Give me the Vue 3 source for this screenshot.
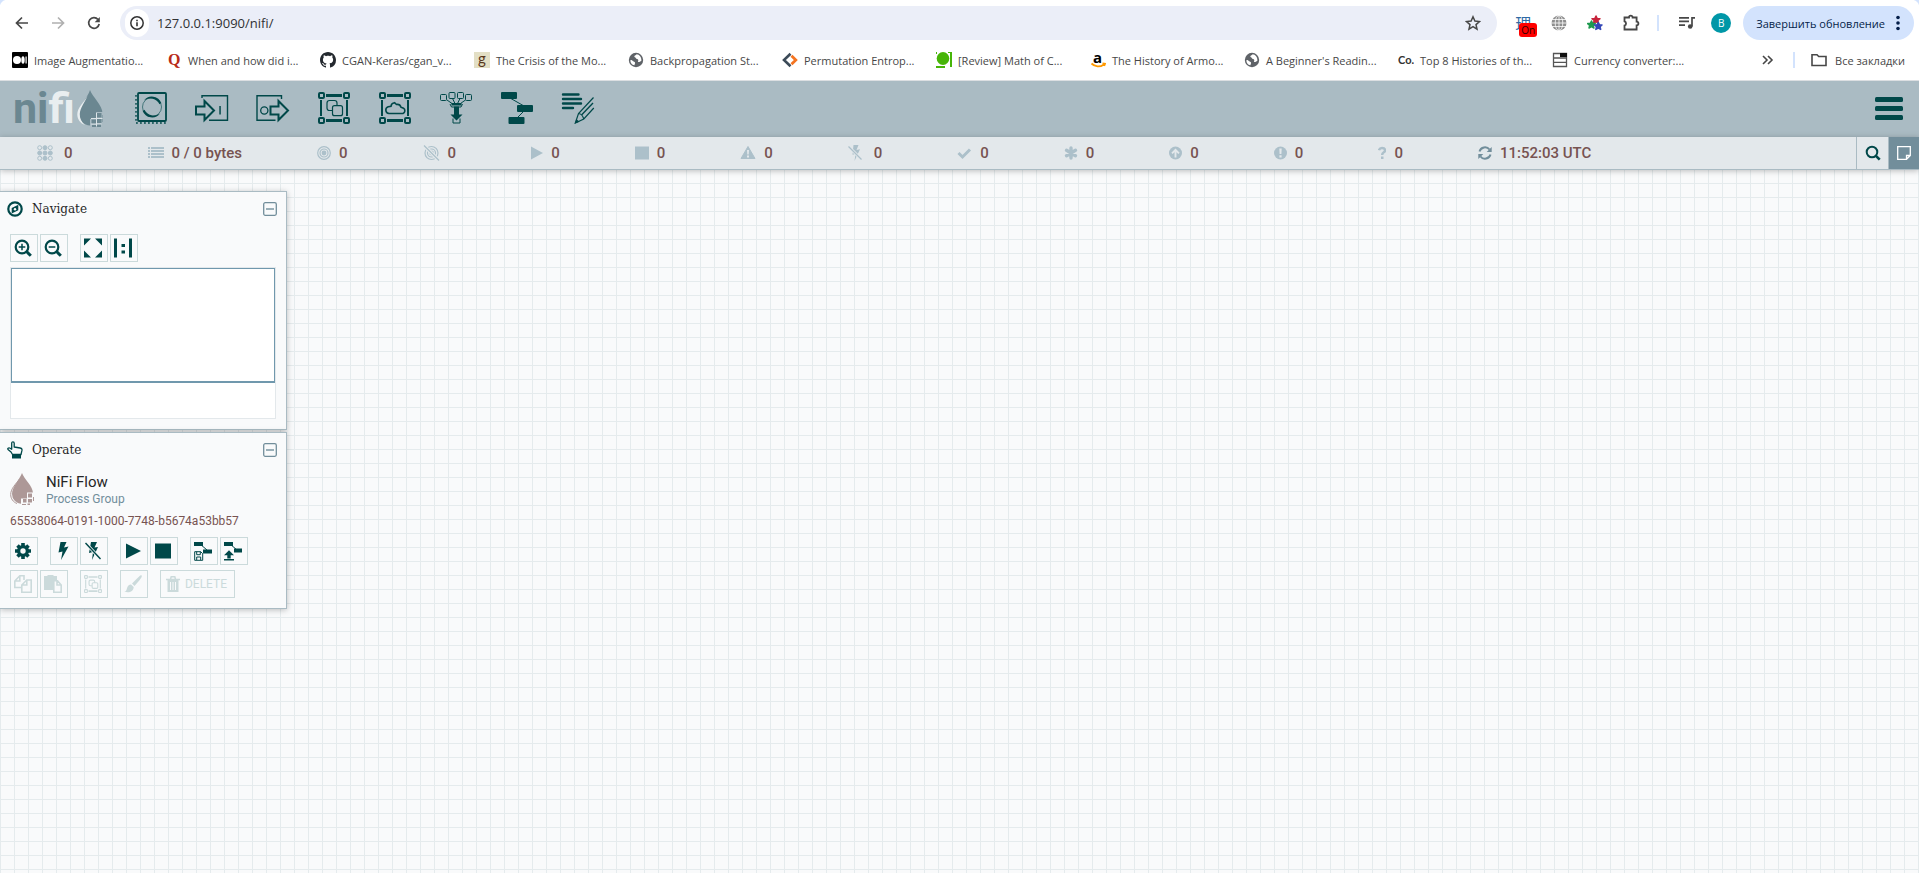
<script setup>
import { ref } from 'vue'

const address = ref('127.0.0.1:9090/nifi/')

const bookmarks = [
  { icon: 'medium', label: 'Image Augmentatio...' },
  { icon: 'quora', label: 'When and how did i...' },
  { icon: 'github', label: 'CGAN-Keras/cgan_v...' },
  { icon: 'goodreads', label: 'The Crisis of the Mo...' },
  { icon: 'earth', label: 'Backpropagation St...' },
  { icon: 'brackets', label: 'Permutation Entrop...' },
  { icon: 'review', label: '[Review] Math of C...' },
  { icon: 'amazon', label: 'The History of Armo...' },
  { icon: 'earth', label: "A Beginner's Readin..." },
  { icon: 'co', label: 'Top 8 Histories of th...' },
  { icon: 'sheet', label: 'Currency converter:...' },
]

const components = [
  { icon: 'processor', label: 'Processor' },
  { icon: 'portIn', label: 'Input Port' },
  { icon: 'portOut', label: 'Output Port' },
  { icon: 'group', label: 'Process Group' },
  { icon: 'remote', label: 'Remote Process Group' },
  { icon: 'funnel', label: 'Funnel' },
  { icon: 'template', label: 'Template' },
  { icon: 'label', label: 'Label' },
]

const stats = [
  { icon: 'threads', text: '0' },
  { icon: 'list', text: '0 / 0 bytes' },
  { icon: 'target', text: '0' },
  { icon: 'targetOff', text: '0' },
  { icon: 'playSmall', text: '0' },
  { icon: 'stopSmall', text: '0' },
  { icon: 'warning', text: '0' },
  { icon: 'boltOffSmall', text: '0' },
  { icon: 'check', text: '0' },
  { icon: 'asterisk', text: '0' },
  { icon: 'upCircle', text: '0' },
  { icon: 'alertCircle', text: '0' },
  { icon: 'question', text: '0' },
]

const zoomButtons = [
  [{ icon: 'zoomIn', label: 'Zoom In' }, { icon: 'zoomOut', label: 'Zoom Out' }],
  [{ icon: 'fit', label: 'Fit' }, { icon: 'actual', label: 'Actual Size' }],
]

const operateTop = [
  [{ icon: 'gear', label: 'Configuration' }],
  [{ icon: 'bolt', label: 'Enable' }, { icon: 'boltOff', label: 'Disable' }],
  [{ icon: 'play', label: 'Start' }, { icon: 'stop', label: 'Stop' }],
  [{ icon: 'saveTemplate', label: 'Create Template' }, { icon: 'uploadTemplate', label: 'Upload Template' }],
]

const operateBottom = [
  [{ icon: 'copy', label: 'Copy' }, { icon: 'paste', label: 'Paste' }],
  [{ icon: 'groupSmall', label: 'Group' }],
  [{ icon: 'brush', label: 'Change color' }],
]

const frame = `<g fill="none" stroke="currentColor" stroke-width="2"><rect x="1" y="1" width="5" height="5" rx="1"/><rect x="26" y="1" width="5" height="5" rx="1"/><rect x="1" y="26" width="5" height="5" rx="1"/><rect x="26" y="26" width="5" height="5" rx="1"/></g>
<path fill="currentColor" d="M8 2h16v3H8zM8 27h16v3H8zM2 8h2v16H2zM28 8h2v16h-2z"/>`

const icons = {
  medium: [16, 16, '<rect width="16" height="16" rx="1"/><circle cx="5" cy="8" r="4" fill="#fff"/><ellipse cx="11" cy="8" rx="1.700" ry="3.800" fill="#fff"/><rect x="13.500" y="4.500" width="1.200" height="7" fill="#fff"/>'],
  quora: [16, 16, '<text x="2" y="13" font-family="Liberation Serif, serif" font-weight="700" font-size="16" fill="#b92b17">Q</text>'],
  github: [16, 16, '<path fill="#24292f" d="M8 0C3.580 0 0 3.580 0 8c0 3.540 2.290 6.530 5.470 7.590.4.070.55-.17.55-.38 0-.19-.01-.82-.01-1.490-2.010.37-2.530-.49-2.690-.94-.09-.23-.48-.94-.82-1.130-.28-.15-.68-.52-.01-.53.63-.01 1.080.58 1.230.82.72 1.210 1.870.87 2.330.66.07-.52.28-.87.51-1.070-1.780-.2-3.640-.89-3.640-3.950 0-.87.31-1.590.82-2.150-.08-.2-.36-1.020.08-2.120 0 0 .67-.21 2.200.82.64-.18 1.320-.27 2-.27s1.360.09 2 .27c1.530-1.040 2.200-.82 2.200-.82.44 1.100.16 1.920.08 2.120.51.56.82 1.270.82 2.150 0 3.070-1.870 3.750-3.650 3.950.29.25.54.73.54 1.480 0 1.070-.01 1.930-.01 2.200 0 .21.15.46.55.38A8.010 8.010 0 0 0 16 8c0-4.420-3.580-8-8-8z"/>'],
  goodreads: [16, 16, '<rect width="16" height="16" fill="#e3dfc5"/><text x="4" y="12" font-family="Lato, sans-serif" font-size="15" fill="#59371b">g</text>'],
  earth: [16, 16, '<circle cx="8" cy="8" r="7.200" fill="#5f6368"/><path fill="#fff" d="M2.500 8c.5-.3 1.800.2 2.500 1s1.600.5 2 1.500-.5 1.500-.5 2.800C4 13 2 10.500 2.500 8zM8.500 2.200c-.3 1.300-2 1-2.200 2s1.200 1 1.500 1.900c.5 1.200 2 .9 2.500 1.900.3.900-.8 1-.2 1.800.8.700 2.200-.2 3.300-1C13.600 5 11.500 2.500 8.500 2.200z"/>'],
  brackets: [16, 16, '<path fill="none" stroke="#3c4a58" stroke-width="2.600" d="M8.500 1.800 2 8l6.500 6.200"/><path fill="none" stroke="#f47421" stroke-width="2.800" d="M9.500 3.800 13.800 8l-4.300 4.200"/>'],
  review: [16, 16, '<path fill="#47b508" d="M0 0h1v2H0zM12 0h4v15h-2V1h-2zM0 14h9v2H0z"/><ellipse cx="7" cy="6.500" rx="6.300" ry="6.500" fill="#47b508"/><path stroke="#fff" stroke-width="1" d="M0 13.500h12"/>'],
  amazon: [16, 16, '<text x="3" y="11" font-family="Open Sans, sans-serif" font-weight="700" font-size="15">a</text><path fill="none" stroke="#f90" stroke-width="1.800" d="M1.500 11.500c3.500 3.500 8.500 3.700 12 1.200M12.500 11.500l2.500.3-.8 2.200"/>'],
  co: [16, 16, '<text x="0" y="12" font-family="Lato, sans-serif" font-weight="700" font-size="11" fill="#333">Co.</text>'],
  sheet: [16, 16, '<path fill="#fff" stroke="#555" stroke-width="1.300" d="M1.500 1.500h13v13h-13zM1.500 6h13M1.500 10.300h13"/><path d="M8 1h7v4H8z" fill="#111"/>'],
  folder: [16, 16, '<path fill="none" stroke="#474747" stroke-width="1.600" d="M1 2.800h5l1.700 1.700H15v9H1z"/>'],
  more: [16, 16, '<path fill="none" stroke="#474747" stroke-width="1.600" d="m4 4 4 4-4 4M9 4l4 4-4 4"/>'],
  back: [16, 16, '<path fill="none" stroke="#474747" stroke-width="1.700" d="M14 8H3M8 2.500 2.500 8 8 13.500"/>'],
  forward: [16, 16, '<path fill="none" stroke="#b0b0b0" stroke-width="1.700" d="M2 8h11M8 2.500 13.500 8 8 13.500"/>'],
  reload: [16, 16, '<path fill="none" stroke="#474747" stroke-width="1.700" d="M13.200 9A5.300 5.300 0 1 1 12 4.500"/><path fill="#474747" d="M13.800 2v5.200H8.700z"/>'],
  info: [16, 16, '<circle cx="8" cy="8" r="6.200" fill="none" stroke="#333" stroke-width="1.500"/><path fill="#333" d="M7.200 7.200h1.600v4H7.200zM7.200 4.700h1.600v1.500H7.200z"/>'],
  star: [16, 16, '<path fill="none" stroke="#474747" stroke-width="1.500" d="m8 1.800 1.900 4.300 4.600.4L11 9.600l1 4.500-4-2.400-4 2.400 1-4.500-3.500-3.100 4.600-.4z"/>'],
  globe: [16, 16, '<circle cx="8" cy="8" r="7.500" fill="#8f8f8f"/><g fill="none" stroke="#fff" stroke-width=".8"><ellipse cx="8" cy="8" rx="3.800" ry="7.500"/><path d="M8 0v16M0 8h16M1 4.500h14M1 11.500h14"/></g>'],
  stars: [16, 16, '<g stroke-width="1.500" stroke-linejoin="round"><path fill="#c7243c" stroke="#c7243c" d="m9 1 1.200 2.500 2.800.2-2.200 1.800.7 2.700L9 6.800 6.500 8.200l.7-2.700L5 3.700l2.800-.2z"/><path fill="#1f9a50" stroke="#1f9a50" d="m4.500 6 1.100 2.400 2.600.2-2 1.800.7 2.600-2.400-1.300L2 13l.7-2.600-2-1.800 2.600-.2z"/><path fill="#3548b8" stroke="#3548b8" d="m11.300 7.500 1.200 2.300 2.500.2-2 1.800.7 2.600-2.400-1.300-2.500 1.300.7-2.600-2-1.800 2.600-.2z"/></g>'],
  puzzle: [18, 18, '<path fill="none" stroke="#474747" stroke-width="1.800" d="M2.500 3.500H7a1.800 1.800 0 0 1 3.600 0h4v4.200a1.800 1.800 0 0 1 0 3.600v4.200H2.500v-4a2.200 2.200 0 0 0 0-4.200z"/>'],
  playlist: [16, 16, '<path fill="#474747" d="M0 2h10v1.700H0zM0 5.600h10v1.700H0zM0 9.200h6v1.700H0z"/><path fill="none" stroke="#474747" stroke-width="1.700" d="M16 2.900h-3v8.600"/><circle cx="11.200" cy="11.500" r="2.300" fill="#474747"/>'],
  dots: [4, 16, '<g fill="#041e49"><circle cx="2" cy="2.500" r="1.800"/><circle cx="2" cy="8" r="1.800"/><circle cx="2" cy="13.500" r="1.800"/></g>'],

  drop: [26, 37, '<path fill="#6b8791" d="M13 0C11 7 2 16 2 24a11.500 11.500 0 0 0 11 11.500c8 0 12.500-6 12.500-12C25.500 15 15.500 7 13 0z"/><path fill="#e9eef0" d="M10.500 6C7 12 .3 17.500.3 24.500.3 29.500 3.500 33.500 8 35 4.500 32 2.600 28.500 2.800 24 3 18 8 12 10.500 6z"/><path fill="#aabbc3" d="M19 22h7v15H13v-8h6z"/><path fill="#6b8791" d="M20 23h4.500v4.500H20zM14.500 29.500H19V34h-4.500zM20 28.500h4.500V33H20zM25.500 25H26v7h-.5zM20 34h4v3h-4zM15 35h4v2h-4z"/><path fill="#dce4e7" d="M19 23h1v13h-1zM14 28h11.500v1H14zM14 33.500h10.500v1H14z"/>'],
  dropSmall: [24, 32, '<path fill="#ad9897" d="M12 0C10 6 2 14 2 21a10 10 0 0 0 10 10c7 0 11-5 11-10.500C23 13 14 6 12 0z"/><path fill="none" stroke="#ad9897" stroke-width="1" d="M9.500 6C6 11 .7 15.500.7 21.500c0 4 2.300 7.500 6.300 9"/><path fill="#f9fafb" d="M17 19.500h7V32H11v-6.500h6z"/><path fill="#ad9897" d="M18 20.500h4v4h-4zM13 26h3.500v3.500H13zM18 26h4v3.500h-4zM23 24h1v4h-1zM12 31h4v1h-4zM17.500 30.500H20V32h-2.500z"/>'],

  processor: [32, 32, '<rect x="3" y="1" width="28" height="28" rx="1" fill="none" stroke="currentColor" stroke-width="1.800"/><path stroke="currentColor" stroke-width="1.400" stroke-dasharray="1.800 2.200" fill="none" d="M1 3v28H31"/><circle cx="17" cy="15" r="9.500" fill="none" stroke="currentColor" stroke-width=".6"/><path fill="currentColor" d="M9 8.500A10 10 0 0 1 26.300 11L24.500 12.300A10.500 10.500 0 0 0 9 8.500z"/><path fill="currentColor" transform="rotate(180 17 15)" d="M9 8.500A10 10 0 0 1 26.300 11L24.500 12.300A10.500 10.500 0 0 0 9 8.500z"/>'],
  portIn: [34, 32, '<path fill="none" stroke="currentColor" stroke-width="1.400" d="M7 6V3.700h25.500v24.500H14"/><path fill="none" stroke="currentColor" stroke-width="2" d="M1 14.500h8.500V9L19 18.500 9.500 28v-5.500H1z"/><path fill="currentColor" d="M24.300 14h1.500v8.500h-1.500z"/>'],
  portOut: [34, 32, '<path fill="none" stroke="currentColor" stroke-width="1.400" d="M25.500 7V3.700H1v24.500h18.500"/><circle cx="8.300" cy="18.500" r="3.600" fill="none" stroke="currentColor" stroke-width="1.300"/><path fill="none" stroke="currentColor" stroke-width="2" d="M14.500 14.500h8V9l9.500 9.500-9.500 9.500v-5.500h-8z"/>'],
  group: [32, 32, frame + '<g fill="none" stroke="currentColor" stroke-width="1.200"><path d="M14 18.500h-2.500q-2.500 0-2.500-2.500v-5q0-2.500 2.500-2.500h5q2.500 0 2.500 2.500v2.500"/><rect x="14.500" y="13.700" width="10" height="10" rx="2"/></g>'],
  remote: [32, 32, frame + '<path fill="none" stroke="currentColor" stroke-width="1.600" d="M10 21.500a3.500 3.500 0 0 1-.8-6.800l2.800-.5a4 4 0 0 1 3.500-3.500l2 1.800a4 4 0 0 1 4.500 2.700l2.500 1a3 3 0 0 1-.5 5.300z"/>'],
  groupSmall: [32, 32, frame + '<g fill="none" stroke="currentColor" stroke-width="2"><path d="M14 19h-2.500q-2.500 0-2.500-2.500v-5q0-2.500 2.500-2.500h5q2.500 0 2.500 2.500v2.500"/><rect x="14.500" y="13.700" width="10" height="10" rx="2"/></g>'],
  funnel: [32, 32, '<g fill="none" stroke="currentColor" stroke-width="1"><rect x=".5" y="2.500" width="6" height="6" rx="1"/><rect x="9" y=".5" width="6" height="6" rx="1"/><rect x="17.500" y=".5" width="6" height="6" rx="1"/><rect x="25.500" y="2.500" width="6" height="6" rx="1"/><path d="m7 8 5 3.500M12.500 6.500l2.500 5M20 6.500l-2.500 5M25.500 8l-5 3.500M10 12l1.500 3h9.500l1.500-3"/><path d="M13 26.500V31h7v-4.500"/></g><path fill="currentColor" d="M11.500 11h10v2.500h-10zM14 14.500h5v8h3.500l-6 6-6-6H14z"/>'],
  template: [32, 32, '<path fill="none" stroke="currentColor" d="m9 6 14 8M23 19l-7 7"/><g fill="currentColor"><rect width="16" height="7" rx="1"/><rect x="16" y="13" width="16" height="7" rx="1"/><rect x="7.500" y="25" width="16" height="7" rx="1"/></g>'],
  label: [34, 32, '<path stroke="currentColor" stroke-width="2.400" stroke-linecap="round" d="M2 2.500h15.500M2 7h18M2 11.500h18M2 16h10"/><g fill="none" stroke="currentColor" stroke-width="1.200"><path d="m32.500 5.500-15 16-3.200 9.500 8.500-4 10-11M17.500 21.500c3 .5 4 1.500 5.300 5.500"/></g><path stroke="currentColor" stroke-width="1.400" d="M32 11 20.500 23"/><path fill="currentColor" d="m14 31.500 1.300-4.500 3.200 2.700z"/>'],
  menu: [28, 23, '<g fill="currentColor"><rect width="28" height="5" rx="1.500"/><rect y="9" width="28" height="5" rx="1.500"/><rect y="18" width="28" height="5" rx="1.500"/></g>'],

  threads: [19, 16, '<g fill="currentColor" stroke="currentColor" stroke-width="1"><circle cx="2.700" cy="2.700" r="2" fill="none"/><circle cx="8" cy="2.700" r="2"/><circle cx="13.300" cy="2.700" r="2" fill="none"/><circle cx="2.700" cy="8" r="2"/><circle cx="8" cy="8" r="2"/><circle cx="13.300" cy="8" r="2"/><circle cx="2.700" cy="13.300" r="2" fill="none"/><circle cx="8" cy="13.300" r="2" /><circle cx="13.300" cy="13.300" r="2" fill="none"/></g>'],
  list: [16, 16, '<path fill="currentColor" d="M0 2h2v2H0zM3 2h13v2H3zM0 5h2v2H0zM3 5h13v2H3zM0 8h2v2H0zM3 8h13v2H3zM0 11h2v2H0zM3 11h13v2H3z"/>'],
  target: [14, 16, '<g fill="none" stroke="currentColor" stroke-width="1.200"><circle cx="7" cy="8" r="6.300"/><circle cx="7" cy="8" r="4"/></g><circle cx="7" cy="8" r="2.400" fill="currentColor"/>'],
  targetOff: [17, 16, '<g fill="none" stroke="currentColor" stroke-width="1.200"><circle cx="8.500" cy="8" r="6.500"/><circle cx="8.500" cy="8" r="4"/><circle cx="8.500" cy="8" r="1.800"/></g><path stroke="#e3e8eb" stroke-width="3.500" d="m1 .5 15 15"/><path stroke="currentColor" stroke-width="1.300" d="m1 .5 15 15"/>'],
  playSmall: [12, 16, '<path fill="currentColor" d="M0 1.500 12 8 0 14.500z"/>'],
  stopSmall: [14, 16, '<path fill="currentColor" d="M0 1.500h14v13H0z"/>'],
  warning: [16, 16, '<path fill="currentColor" stroke="currentColor" stroke-linejoin="round" d="m8 1.500 7 12H1z"/><path fill="#e3e8eb" d="M7 5h2l-.3 4.500H7.300zM7 10.500h2v2H7z"/>'],
  boltOffSmall: [18, 16, '<path fill="currentColor" d="M5.500 0h5L8.500 5l3.500-.7L6.500 16l1-7-3 .8z"/><path stroke="#e3e8eb" stroke-width="3" d="m.5 1.500 13 13"/><path stroke="currentColor" stroke-width="1.200" d="m.5 1.500 13 13"/>'],
  check: [15, 16, '<path fill="none" stroke="currentColor" stroke-width="3" d="m1.500 8 4 4L13 4.500"/>'],
  asterisk: [14, 16, '<path stroke="currentColor" stroke-width="3.400" stroke-linecap="round" d="M7 3v10M2.500 5.300l9 5.400M11.500 5.300l-9 5.400"/>'],
  upCircle: [13, 16, '<circle cx="6.500" cy="8" r="6.500" fill="currentColor"/><path fill="none" stroke="#e3e8eb" stroke-width="1.900" d="M6.500 12.500V5M3 8.300l3.500-3.500L10 8.300"/>'],
  alertCircle: [13, 16, '<circle cx="6.500" cy="8" r="6.500" fill="currentColor"/><path fill="#e3e8eb" d="M5.300 3.500h2.400L7.400 9H5.600zM5.400 10.200h2.200v2.200H5.400z"/>'],
  question: [8, 16, '<path fill="none" stroke="currentColor" stroke-width="2.500" d="M1 5.200C1.500 3.500 2.500 3 4 3c4 0 3.500 3.500 1.500 4.500Q4.200 8.200 4.200 10"/><path fill="currentColor" d="M3 11.500h2.500V14H3z"/>'],
  refresh: [14, 16, '<path fill="none" stroke="currentColor" stroke-width="2" d="M1.500 6.500A5.700 5.700 0 0 1 11.500 4.500M12.500 9.500A5.700 5.700 0 0 1 2.500 11.500"/><path fill="currentColor" d="M13.700 2v5h-5zM.3 14V9h5z"/>'],
  search: [16, 16, '<circle cx="7" cy="7" r="5.300" fill="none" stroke="currentColor" stroke-width="2"/><path stroke="currentColor" stroke-width="2.600" d="m10.700 10.700 4 4"/>'],
  note: [14, 14, '<path fill="none" stroke="#fff" stroke-width="1.300" d="M.7.7h12.600v8.800l-3.800 3.800H.7zM9.500 13V9.500H13"/>'],

  compass: [16, 16, '<circle cx="8" cy="8" r="6.700" fill="none" stroke="currentColor" stroke-width="2.200"/><path fill="currentColor" d="M11.300 3.800v5.500l-6.600 3.200V7z"/><circle cx="8" cy="8.200" r="1.200" fill="#f9fafb"/>'],
  hand: [16, 18, '<path fill="none" stroke="currentColor" stroke-width="1.300" stroke-linejoin="round" d="M5.500 13.500 4 11 1 8.500C.3 7.500 1.500 6.500 2.700 7l2 1.200V2.300c0-2 2.500-2 2.500 0V6l6 1c1.500.3 2 1 1.800 2.200l-1 4.300z"/><path fill="currentColor" d="M5 14h9v3.500H5z"/>'],
  minus: [14, 14, '<rect x=".7" y=".7" width="12.600" height="12.600" rx="1.500" fill="none" stroke="currentColor" stroke-width="1.300"/><path fill="currentColor" d="M3 6.300h8v1.400H3z"/>'],
  zoomIn: [18, 18, '<circle cx="8" cy="8" r="6.300" fill="none" stroke="currentColor" stroke-width="2.200"/><path stroke="currentColor" stroke-width="3" d="m12.300 12.300 4.500 4.500"/><path stroke="currentColor" stroke-width="1.500" d="M4.700 8h6.600M8 4.700v6.600"/>'],
  zoomOut: [18, 18, '<circle cx="8" cy="8" r="6.300" fill="none" stroke="currentColor" stroke-width="2.200"/><path stroke="currentColor" stroke-width="3" d="m12.300 12.300 4.500 4.500"/><path stroke="currentColor" stroke-width="1.500" d="M4.700 8h6.600"/>'],
  fit: [18, 20, '<path fill="currentColor" d="M0 .5h7l-7 7zM18 .5v7l-7-7zM0 19.500v-7l7 7zM18 19.500h-7l7-7z"/>'],
  actual: [18, 20, '<path fill="currentColor" d="M0 .5h3v19H0zM15 .5h3v19h-3zM7.500 6H11v3H7.500zM7.500 12.500H11v3H7.500z"/>'],
  gear: [16, 16, '<path stroke="currentColor" stroke-width="3.600" d="M8 0v16M0 8h16M2.500 2.500l11 11M13.500 2.500l-11 11"/><circle cx="8" cy="8" r="6" fill="currentColor"/><circle cx="8" cy="8" r="2.700" fill="#f9fafb"/>'],
  bolt: [16, 18, '<path fill="currentColor" d="M5.500 0h6L9 5.500l4.500-1L6 18l1.500-8.500-4 1z"/>'],
  boltOff: [18, 18, '<path fill="currentColor" d="M7 0h6l-2.500 5.500L14 5 8 18l1-8-4 1z"/><path stroke="#f9fafb" stroke-width="3" d="m1.500 1 15 16"/><path stroke="currentColor" stroke-width="1.400" d="m1.500 1 15 16"/>'],
  play: [16, 16, '<path fill="currentColor" d="m1 .5 15 7.500-15 7.500z"/>'],
  stop: [16, 16, '<path fill="currentColor" d="M0 .5h16v15H0z"/>'],
  saveTemplate: [18, 20, '<path stroke="currentColor" d="m6 3 7 6"/><path fill="currentColor" d="M0 1h9v4H0zM9 8.500h9v4H9z"/><path fill="none" stroke="currentColor" stroke-width="1" d="M.7 10.700h6l2 2v6.600h-8zM2.700 10.700v3h3.600v-3M2.700 19v-3h4v3"/>'],
  uploadTemplate: [18, 20, '<path stroke="currentColor" d="m6 3 7 6"/><path fill="currentColor" d="M0 1h9v4H0zM10 7.500h8v4h-8zM0 18h10v1.500H0zM3.300 17.500v-3.300H0l5-5 5 5H6.700v3.300z"/>'],
  copy: [18, 18, '<path fill="none" stroke="currentColor" stroke-width="1.600" d="M7 12.500H.8V6l5-5.200H10V5M5.800.8V6h-5M7.800 17.200V10l5-5h4.400v12.200zM12.800 5v5h-5"/>'],
  paste: [18, 18, '<path fill="currentColor" d="M0 1h3.500V0h6v1H13v4H9v10H0z"/><path fill="none" stroke="currentColor" stroke-width="1.600" d="M9 5.800h4.500L17.200 10v7.200H9.800V5.800M13 5.800V10h4"/>'],
  brush: [18, 18, '<path fill="currentColor" d="M17.500.3c1 1-.5 3-2 5L10.500 11 8 8.500l5-5c1.700-1.700 3.500-4 4.500-3.200zM7 9.500 9.700 12c-.2 4.500-5 6.500-9.400 4.500 2 0 2.200-1.500 2.700-3.200C3.500 11 5 9.500 7 9.500z"/>'],
  trash: [14, 16, '<path fill="none" stroke="currentColor" stroke-width="1.500" d="M0 3.500h14M4.500 3.300l.7-2.500h3.600l.7 2.500"/><path fill="currentColor" d="M1.500 4h11v12h-11z"/><path stroke="#f9fafb" stroke-width="1" d="M4.500 6v8M7 6v8M9.500 6v8"/>'],
}

const box = (name) => `0 0 ${icons[name][0]} ${icons[name][1]}`
</script>

<template>
  <div class="screen">
    <header class="browser">
      <div class="toolbar">
        <button class="tool" aria-label="Back"><svg width="16" height="16" :viewBox="box('back')" v-html="icons.back[2]" /></button>
        <button class="tool" aria-label="Forward"><svg width="16" height="16" :viewBox="box('forward')" v-html="icons.forward[2]" /></button>
        <button class="tool" aria-label="Reload"><svg width="16" height="16" :viewBox="box('reload')" v-html="icons.reload[2]" /></button>
        <div class="omnibox">
          <button class="site" aria-label="Site information"><svg width="16" height="16" :viewBox="box('info')" v-html="icons.info[2]" /></button>
          <input v-model="address" class="address" type="text" aria-label="Address" />
          <button class="tool" aria-label="Bookmark this page"><svg width="16" height="16" :viewBox="box('star')" v-html="icons.star[2]" /></button>
        </div>
        <button class="tool kanji" aria-label="Dictionary extension">理<span class="badge">On</span></button>
        <button class="tool" aria-label="Globe extension"><svg width="16" height="16" :viewBox="box('globe')" v-html="icons.globe[2]" /></button>
        <button class="tool" aria-label="Stars extension"><svg width="16" height="16" :viewBox="box('stars')" v-html="icons.stars[2]" /></button>
        <button class="tool" aria-label="Extensions"><svg width="18" height="18" :viewBox="box('puzzle')" v-html="icons.puzzle[2]" /></button>
        <span class="rule" />
        <button class="tool" aria-label="Media controls"><svg width="16" height="16" :viewBox="box('playlist')" v-html="icons.playlist[2]" /></button>
        <button class="avatar" aria-label="Profile">В</button>
        <button class="update">Завершить обновление<svg width="4" height="16" :viewBox="box('dots')" v-html="icons.dots[2]" /></button>
      </div>
      <nav class="bookmarks">
        <a v-for="(b, i) in bookmarks" :key="i" href="#" class="bookmark">
          <svg width="16" height="16" :viewBox="box(b.icon)" v-html="icons[b.icon][2]" /><span>{{ b.label }}</span>
        </a>
        <div class="bookmark-end">
          <button class="tool" aria-label="More bookmarks"><svg width="16" height="16" :viewBox="box('more')" v-html="icons.more[2]" /></button>
          <span class="rule" />
          <a href="#" class="all"><svg width="16" height="16" :viewBox="box('folder')" v-html="icons.folder[2]" />Все закладки</a>
        </div>
      </nav>
    </header>

    <div class="components">
      <div class="logo">
        <span class="word">ni<span class="light">fi</span></span>
        <svg width="26" height="37" :viewBox="box('drop')" v-html="icons.drop[2]" />
      </div>
      <button v-for="c in components" :key="c.icon" class="component" :aria-label="c.label">
        <svg :width="icons[c.icon][0]" height="32" :viewBox="box(c.icon)" v-html="icons[c.icon][2]" />
      </button>
      <button class="menu" aria-label="Global menu"><svg width="28" height="23" :viewBox="box('menu')" v-html="icons.menu[2]" /></button>
    </div>

    <div class="status">
      <div class="stats">
        <span v-for="s in stats" :key="s.icon" class="stat">
          <svg :width="icons[s.icon][0]" height="16" :viewBox="box(s.icon)" v-html="icons[s.icon][2]" />{{ s.text }}
        </span>
        <span class="stat time"><svg width="14" height="16" :viewBox="box('refresh')" v-html="icons.refresh[2]" />11:52:03 UTC</span>
      </div>
      <button class="status-button" aria-label="Search"><svg width="16" height="16" :viewBox="box('search')" v-html="icons.search[2]" /></button>
      <button class="status-button bulletin" aria-label="Bulletins"><svg width="14" height="14" :viewBox="box('note')" v-html="icons.note[2]" /></button>
    </div>

    <main class="canvas">
      <section class="panel">
        <div class="panel-head">
          <svg width="16" height="16" :viewBox="box('compass')" v-html="icons.compass[2]" />
          <h2>Navigate</h2>
          <button class="collapse" aria-label="Collapse Navigate"><svg width="14" height="14" :viewBox="box('minus')" v-html="icons.minus[2]" /></button>
        </div>
        <div class="actions">
          <div v-for="(g, i) in zoomButtons" :key="i" class="action-group">
            <button v-for="b in g" :key="b.icon" class="action" :aria-label="b.label">
              <svg :width="icons[b.icon][0]" :height="icons[b.icon][1]" :viewBox="box(b.icon)" v-html="icons[b.icon][2]" />
            </button>
          </div>
        </div>
        <div class="birdseye"><div class="viewport" /></div>
      </section>

      <section class="panel">
        <div class="panel-head">
          <svg width="16" height="18" :viewBox="box('hand')" v-html="icons.hand[2]" />
          <h2>Operate</h2>
          <button class="collapse" aria-label="Collapse Operate"><svg width="14" height="14" :viewBox="box('minus')" v-html="icons.minus[2]" /></button>
        </div>
        <div class="context">
          <svg width="24" height="32" :viewBox="box('dropSmall')" v-html="icons.dropSmall[2]" />
          <div>
            <div class="name">NiFi Flow</div>
            <div class="type">Process Group</div>
          </div>
        </div>
        <div class="uuid">65538064-0191-1000-7748-b5674a53bb57</div>
        <div class="actions">
          <div v-for="(g, i) in operateTop" :key="i" class="action-group">
            <button v-for="b in g" :key="b.icon" class="action" :aria-label="b.label">
              <svg :width="icons[b.icon][0]" :height="icons[b.icon][1]" :viewBox="box(b.icon)" v-html="icons[b.icon][2]" />
            </button>
          </div>
        </div>
        <div class="actions second">
          <div v-for="(g, i) in operateBottom" :key="i" class="action-group">
            <button v-for="b in g" :key="b.icon" class="action" :aria-label="b.label" disabled>
              <svg width="18" height="18" :viewBox="box(b.icon)" v-html="icons[b.icon][2]" />
            </button>
          </div>
          <button class="action delete" disabled><svg width="14" height="16" :viewBox="box('trash')" v-html="icons.trash[2]" />DELETE</button>
        </div>
      </section>
    </main>
  </div>
</template>

<style>
body {
  margin: 0;
}
</style>

<style scoped>
* {
  box-sizing: border-box;
}
.screen {
  display: flex;
  flex-direction: column;
  min-height: 100vh;
  font-family: Roboto, "Liberation Sans", sans-serif;
  color: #004849;
}
button {
  display: flex;
  align-items: center;
  justify-content: center;
  padding: 0;
  border: 0;
  background: none;
  color: inherit;
  font: inherit;
}
svg {
  display: block;
  flex: none;
}
a {
  color: inherit;
  text-decoration: none;
}

/* Browser window */
.browser {
  padding-bottom: 6px;
  border-bottom: 1px solid #dcdfe2;
  background: radial-gradient(circle at 8px 8px, #fff 8px, #d3e3fd 9px) 0 0 / 8px 8px no-repeat,
    radial-gradient(circle at 0 8px, #fff 8px, #d3e3fd 9px) 100% 0 / 8px 8px no-repeat, #fff;
  font-family: "Open Sans", "Noto Sans", sans-serif;
  font-size: 11px;
  color: #474747;
}
.toolbar {
  display: flex;
  align-items: center;
  gap: 12px;
  height: 46px;
  padding: 0 5px 0 10px;
}
.tool {
  position: relative;
  flex: none;
  width: 24px;
  height: 24px;
}
.omnibox {
  display: flex;
  align-items: center;
  flex: 1;
  gap: 8px;
  height: 34px;
  margin: 0 2px;
  padding: 0 12px 0 5px;
  border-radius: 17px;
  background: #ebeef8;
}
.site {
  width: 24px;
  height: 28px;
  border-radius: 14px;
  background: #fff;
}
.address {
  flex: 1;
  min-width: 0;
  padding: 0;
  border: 0;
  outline: 0;
  background: none;
  font: 13px "Open Sans", "Noto Sans", sans-serif;
  color: #303134;
}
.kanji {
  font: 16px "Noto Sans CJK SC", sans-serif;
  color: #2f6aa5;
}
.badge {
  position: absolute;
  left: 8px;
  top: 12px;
  width: 18px;
  border-radius: 3px;
  background: #f00;
  font: 10px/14px "Open Sans", sans-serif;
  text-align: center;
  color: #300;
}
.rule {
  flex: none;
  width: 2px;
  height: 16px;
  margin: 0 4px 0 2px;
  background: #d3e3fd;
}
.avatar {
  width: 20px;
  height: 20px;
  border-radius: 50%;
  background: #0097a7;
  font-size: 10px;
  color: #fff;
}
.update {
  gap: 11px;
  height: 34px;
  padding: 0 14px 0 13px;
  border-radius: 17px;
  background: #d3e3fd;
  color: #041e49;
}
.bookmarks {
  display: flex;
  align-items: center;
  height: 28px;
  padding: 0 14px 0 12px;
}
.bookmark {
  display: flex;
  align-items: center;
  gap: 6px;
  width: 154px;
  white-space: nowrap;
}
.bookmark-end {
  display: flex;
  align-items: center;
  gap: 12px;
  margin-left: auto;
}
.all {
  display: flex;
  align-items: center;
  gap: 8px;
}

/* Component toolbar */
.components {
  display: flex;
  align-items: center;
  height: 56px;
  padding: 0 16px 2px 13px;
  background: #aabbc3;
}
.logo {
  display: flex;
  align-items: center;
  gap: 4px;
  width: 107px;
}
.word {
  width: 60px;
  font: 700 43px/50px Roboto, "Liberation Sans", sans-serif;
  color: #6b8791;
}
.light {
  color: #e9eef0;
}
.component {
  flex: none;
  width: 61px;
  height: 54px;
}
.menu {
  margin-left: auto;
}

/* Status bar */
.status {
  position: relative;
  display: flex;
  height: 33px;
  border-bottom: 1px solid #aabbc3;
  background: #e3e8eb;
  box-shadow: 0 1px 6px rgba(0, 0, 0, 0.25);
}
.stats {
  display: flex;
  align-items: center;
  flex: 1;
  gap: 75px;
  padding-left: 37px;
}
.stat {
  display: flex;
  align-items: center;
  gap: 8px;
  white-space: nowrap;
  font-size: 15px;
  font-weight: 500;
  color: #775351;
}
.stat svg {
  color: #acc0ca;
}
.stat.time svg {
  color: #728e9b;
}
.status-button {
  width: 32px;
  border-left: 1px solid #aabbc3;
}
.bulletin {
  width: 31px;
  background: #728e9b;
}

/* Canvas and palettes */
.canvas {
  flex: 1;
  padding-top: 21px;
  background: linear-gradient(to right, #e5ebed 1px, transparent 1px) 0 0 / 14px 14px,
    linear-gradient(to bottom, transparent 13px, #e5ebed 13px) 0 0 / 14px 14px, #f9fafb;
}
.panel {
  width: 287px;
  margin-bottom: 2px;
  padding: 0 10px 10px;
  border: 1px solid #aabbc3;
  border-left: 0;
  background: rgba(249, 250, 251, 0.97);
  box-shadow: 0 1px 6px rgba(0, 0, 0, 0.25);
}
.panel-head {
  display: flex;
  align-items: center;
  height: 34px;
  margin: 0 -1px 0 -3px;
}
h2 {
  flex: 1;
  margin: 0 0 0 9px;
  font: 12px "DejaVu Serif", serif;
  color: #262626;
}
.collapse {
  color: #728e9b;
}
.actions {
  display: flex;
  gap: 12px;
  margin-top: 8px;
}
.actions.second {
  margin-top: 5px;
}
.action-group {
  display: flex;
  gap: 2px;
}
.action {
  width: 28px;
  height: 28px;
  padding: 0 2px 0 0;
  border: 1px solid #cbdadb;
}
.action:disabled {
  color: #cbdadb;
}
.delete {
  width: 75px;
  gap: 5px;
  font-size: 12px;
}
.birdseye {
  height: 152px;
  margin-top: 5px;
  border: 1px solid #e3e8eb;
  background: #fff;
}
.viewport {
  height: 115px;
  border: 1px solid #7098ad;
  border-bottom-width: 2px;
}
.context {
  display: flex;
  gap: 12px;
  margin-top: 6px;
}
.name {
  font-size: 15px;
  line-height: 18px;
  color: #262626;
}
.type {
  font-size: 12px;
  line-height: 16px;
  color: #728e9b;
}
.uuid {
  margin-top: 6px;
  font-size: 12px;
  line-height: 16px;
  color: #775351;
}
</style>
